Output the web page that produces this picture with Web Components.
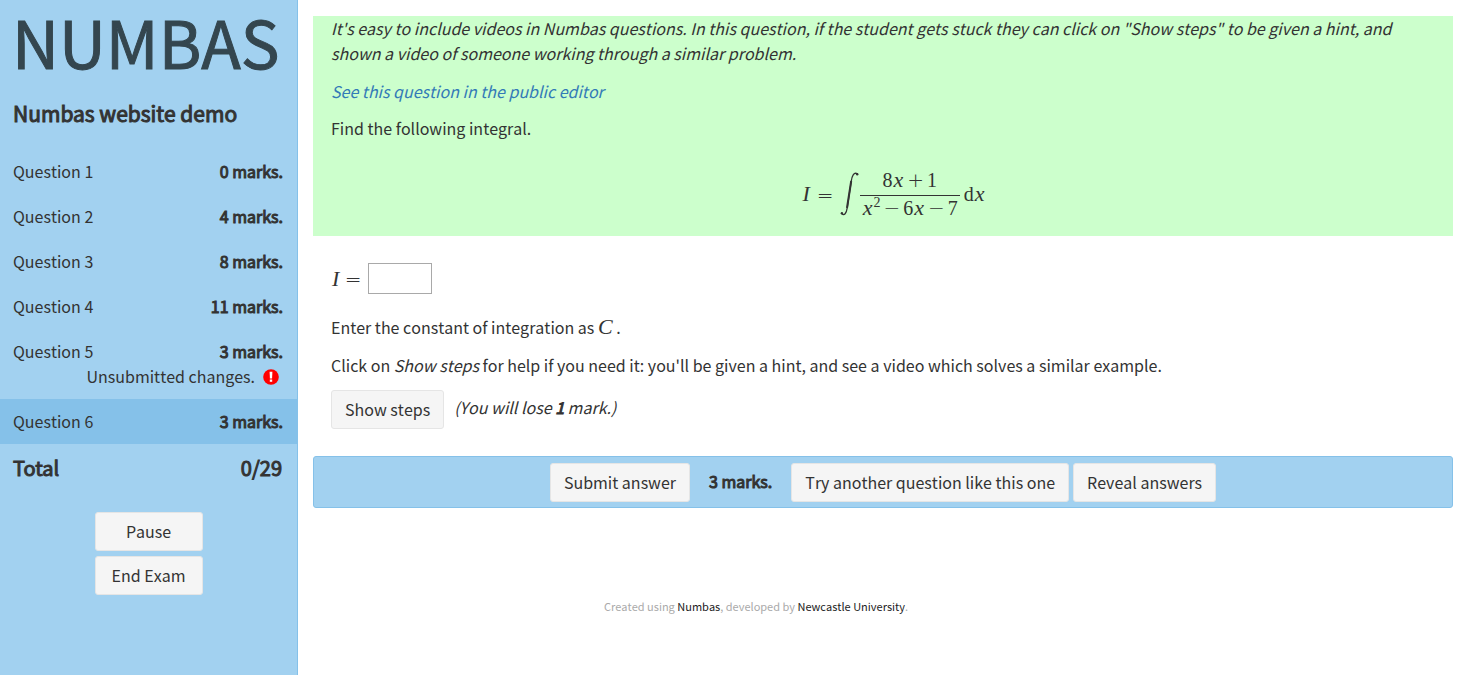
<!DOCTYPE html>
<html lang="en">
<head>
<meta charset="utf-8">
<title>Numbas website demo</title>
<style>
  html, body { margin: 0; }
  body {
    font: 16px/25px "Noto Sans CJK SC", "Noto Sans", sans-serif;
    font-kerning: none;
    color: #333;
    background: #fff;
  }
</style>
</head>
<body>
<exam-app></exam-app>

<script>
const define = (name, html) => customElements.define(name, class extends HTMLElement {
  constructor() {
    super();
    const t = document.createElement('template');
    t.innerHTML = html;
    this.attachShadow({ mode: 'open' }).append(t.content.cloneNode(true));
  }
});

/* Emphasis drawn by thickening the regular weight */
const strong = `b { font-weight: 400; -webkit-text-stroke: 1px currentColor; }`;

define('exam-button', `
<style>
  :host { display: inline-block; }
  button {
    width: 100%; box-sizing: border-box; height: 39px; padding: 0 13px;
    font: inherit; font-kerning: inherit; color: inherit; background: #f5f5f5;
    border: 1px solid #e5e5e5; border-radius: 3px; cursor: pointer; white-space: nowrap;
  }
</style>
<button type="button"><slot></slot></button>`);

define('question-link', `
<style>
  :host { display: block; }
  :host([current]) { background: #85c1e9; }
  a { display: flex; flex-wrap: wrap; justify-content: space-between; padding: 10px 14px 10px 13px; color: inherit; text-decoration: none; }
  ::slotted([slot=note]) { flex-basis: 100%; }
  ${strong}
</style>
<a href="#"><span><slot></slot></span><b><slot name="marks"></slot></b><slot name="note"></slot></a>`);

define('unsaved-note', `
<style>
  :host { display: flex; justify-content: flex-end; align-items: center; gap: 8px; padding-right: 4px; }
  svg { display: block; }
</style>
<span>Unsubmitted changes.</span>
<svg width="16" height="16" viewBox="0 0 16 16" aria-hidden="true"><circle cx="8" cy="8" r="7.8" fill="#f00"/><path d="M6.6 2.8h2.8l-.3 6.6H6.9z" fill="#fff"/><path d="M6.8 10.5h2.4v2.3H6.8z" fill="#fff"/></svg>`);

define('exam-sidebar', `
<style>
  :host { display: block; box-sizing: border-box; background: #a2d1f0; border-right: 1px solid #85c1e9; }
  .logo { font-size: 65px; line-height: 82px; color: #34464f; padding: 0 0 10px 12px; white-space: nowrap; -webkit-text-stroke: 1px currentColor; }
  h1 { font-size: 21px; line-height: 25px; font-weight: 400; -webkit-text-stroke: 1px currentColor; font-kerning: normal; margin: 9px 13px 23px; }
  .total { display: flex; justify-content: space-between; font-size: 20px; font-kerning: normal; padding: 11px 15px 14px 13px; }
  .controls { display: flex; flex-direction: column; gap: 5px; width: 108px; margin: 18px auto 0; }
  nav { display: block; }
  ${strong}
</style>
<div class="logo">NUMBAS</div>
<h1>Numbas website demo</h1>
<nav>
  <question-link>Question 1<span slot="marks">0 marks.</span></question-link>
  <question-link>Question 2<span slot="marks">4 marks.</span></question-link>
  <question-link>Question 3<span slot="marks">8 marks.</span></question-link>
  <question-link>Question 4<span slot="marks">11 marks.</span></question-link>
  <question-link>Question 5<span slot="marks">3 marks.</span><unsaved-note slot="note"></unsaved-note></question-link>
  <question-link current>Question 6<span slot="marks">3 marks.</span></question-link>
</nav>
<div class="total"><b>Total</b><b>0/29</b></div>
<div class="controls"><exam-button>Pause</exam-button><exam-button>End Exam</exam-button></div>`);

define('math-integral', `
<style>
  :host { display: flex; justify-content: center; align-items: center; font: 20px/24px "Liberation Serif", serif; }
  i { font-size: 22px; margin: 0 1px; }
  .eq, .op { font: 200 20px/20px "DejaVu Sans", sans-serif; }
  .eq { margin: 2px 6px 0; }
  svg { display: block; margin-right: 1px; }
  .frac { display: flex; flex-direction: column; align-items: center; margin-right: 4px; }
  .op { margin: 0 3px; }
  .num { height: 27px; }
  .den { height: 24px; border-top: 1px solid #333; box-sizing: border-box; padding: 0 2px; }
  sup { font-size: 14px; line-height: 0; }
</style>
<i>I</i><span class="eq">=</span>
<svg width="19" height="46" viewBox="0 0 19 46" role="img" aria-label="integral"><path d="M1.8 42.6C4.2 45.2 6.4 42.5 7.3 36.5L11.2 10.5C12 4.5 14 .5 17.5 3" fill="none" stroke="#333" stroke-width="1.3" stroke-linecap="round"/><path d="M7 37L11.2 10" stroke="#333" stroke-width="2"/><circle cx="1.9" cy="42.3" r="1.2" fill="#333"/><circle cx="17.2" cy="3.2" r="1.2" fill="#333"/></svg>
<span class="frac"><span class="num">8<i>x</i><span class="op">+</span>1</span><span class="den"><i>x</i><sup>2</sup><span class="op">−</span>6<i>x</i><span class="op">−</span>7</span></span>
<span>d<i>x</i></span>`);

define('question-statement', `
<style>
  :host { display: block; background: #cfc; padding: 0 18px 17px; }
  p { margin: 0 0 12px; }
  .lead { margin-bottom: 13px; }
  a { color: #337ab7; text-decoration: none; }
  math-integral { margin: 27px 0 0; padding-left: 21px; }
</style>
<p class="lead"><em>It's easy to include videos in Numbas questions. In this question, if the student gets stuck they can click on "Show steps" to be given a hint, and shown a video of someone working through a similar problem.</em></p>
<p><a href="#"><em>See this question in the public editor</em></a></p>
<p>Find the following integral.</p>
<math-integral></math-integral>`);

define('question-part', `
<style>
  :host { display: block; padding: 27px 18px; }
  p { margin: 0 0 13px; }
  .answer { display: flex; align-items: center; margin-bottom: 21px; gap: 6px; }
  .m { font-family: "Liberation Serif", serif; font-size: 22px; line-height: 20px; }
  .eq { font: 200 20px/20px "DejaVu Sans", sans-serif; }
  label i { margin-left: 1px; }
  input { width: 64px; height: 31px; box-sizing: border-box; border: 1px solid #a9a9a9; background: #fff; font: inherit; padding: 2px 4px; }
  .steps { display: flex; gap: 10px; margin-top: -1px; }
  .steps em { line-height: 35px; }
  ${strong}
</style>
<div class="answer"><label class="m" for="ans"><i>I</i> <span class="eq">=</span></label><input id="ans" type="text"></div>
<p>Enter the constant of integration as <i class="m">C</i> .</p>
<p>Click on <em>Show steps</em> for help if you need it: you'll be given a hint, and see a video which solves a similar example.</p>
<div class="steps"><exam-button>Show steps</exam-button><em>(You will lose <b>1</b> mark.)</em></div>`);

define('submit-bar', `
<style>
  :host { display: flex; justify-content: center; align-items: center; box-sizing: border-box; padding: 6px 0 5px; gap: 4px; background: #a2d1f0; border: 1px solid #85c1e9; border-radius: 3px; }
  b { margin: 0 15px; padding-bottom: 2px; }
  ${strong}
</style>
<exam-button>Submit answer</exam-button><b>3 marks.</b><exam-button>Try another question like this one</exam-button><exam-button>Reveal answers</exam-button>`);

define('exam-footer', `
<style>
  :host { display: block; font-size: 11px; text-align: center; color: #aaa; margin: 86px 254px 0 0; }
  a { color: #222; text-decoration: none; }
</style>
Created using <a href="#">Numbas</a>, developed by <a href="#">Newcastle University</a>.`);

define('exam-app', `
<style>
  :host { display: grid; grid-template-columns: 298px minmax(0, 1fr); min-height: 100vh; }
  main { padding: 16px 13px 16px 15px; }
</style>
<exam-sidebar></exam-sidebar>
<main>
  <question-statement></question-statement>
  <question-part></question-part>
  <submit-bar></submit-bar>
  <exam-footer></exam-footer>
</main>`);
</script>
</body>
</html>
